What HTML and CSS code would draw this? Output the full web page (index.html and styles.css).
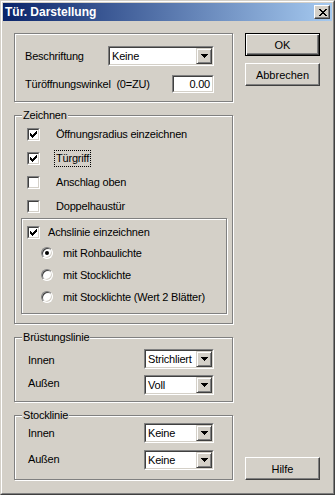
FILE: index.html
```html
<!DOCTYPE html>
<html lang="de">
<head>
    <meta charset="UTF-8">
    <meta name="viewport" content="width=device-width, initial-scale=1.0">
    <title>Tür. Darstellung</title>
    <link rel="stylesheet" href="styles.css">
</head>
<body>
<div class="window">
    <div class="frame">
        <div class="titlebar">
            <span class="caption">Tür. Darstellung</span>
            <span class="close">
                <svg width="8" height="7" viewBox="0 0 8 7" shape-rendering="crispEdges"><path d="M0 0h2v1H0zM6 0h2v1H6zM1 1h2v1H1zM5 1h2v1H5zM2 2h4v1H2zM3 3h2v1H3zM2 4h4v1H2zM1 5h2v1H1zM5 5h2v1H5zM0 6h2v1H0zM6 6h2v1H6z"/></svg>
            </span>
        </div>

        <div class="client">
            <div class="left">
                <!-- Beschriftung -->
                <div class="group first">
                    <div class="row row-combo">
                        <span class="lbl lbl-besch">Beschriftung</span>
                        <div class="combo combo-wide">
                            <div class="combo-in">
                                <span class="combo-text">Keine</span>
                                <span class="drop"><svg width="7" height="4" viewBox="0 0 7 4" shape-rendering="crispEdges"><path d="M0 0h7v1H0zM1 1h5v1H1zM2 2h3v1H2zM3 3h1v1H3z"/></svg></span>
                            </div>
                        </div>
                    </div>
                    <div class="row row-edit">
                        <span class="lbl lbl-winkel">Türöffnungswinkel&nbsp; (0=ZU)</span>
                        <div class="edit"><div class="edit-in">0.00</div></div>
                    </div>
                </div>

                <!-- Zeichnen -->
                <fieldset class="zeichnen">
                    <legend>Zeichnen</legend>
                    <div class="body body-zeichnen">
                        <div class="check-row">
                            <span class="cb"><span class="cb-in"><svg width="7" height="7" viewBox="0 0 7 7" shape-rendering="crispEdges"><path d="M0 2h1v3H0zM1 3h1v3H1zM2 4h1v3H2zM3 3h1v3H3zM4 2h1v3H4zM5 1h1v3H5zM6 0h1v3H6z"/></svg></span></span>
                            <span class="check-text">Öffnungsradius einzeichnen</span>
                        </div>
                        <div class="check-row">
                            <span class="cb"><span class="cb-in"><svg width="7" height="7" viewBox="0 0 7 7" shape-rendering="crispEdges"><path d="M0 2h1v3H0zM1 3h1v3H1zM2 4h1v3H2zM3 3h1v3H3zM4 2h1v3H4zM5 1h1v3H5zM6 0h1v3H6z"/></svg></span></span>
                            <span class="check-text focus">Türgriff</span>
                        </div>
                        <div class="check-row">
                            <span class="cb"><span class="cb-in"></span></span>
                            <span class="check-text">Anschlag oben</span>
                        </div>
                        <div class="check-row">
                            <span class="cb"><span class="cb-in"></span></span>
                            <span class="check-text">Doppelhaustür</span>
                        </div>

                        <div class="subbox">
                            <div class="check-row achs">
                                <span class="cb"><span class="cb-in"><svg width="7" height="7" viewBox="0 0 7 7" shape-rendering="crispEdges"><path d="M0 2h1v3H0zM1 3h1v3H1zM2 4h1v3H2zM3 3h1v3H3zM4 2h1v3H4zM5 1h1v3H5zM6 0h1v3H6z"/></svg></span></span>
                                <span class="check-text">Achslinie einzeichnen</span>
                            </div>
                            <div class="radio-row">
                                <span class="radio checked"></span>
                                <span class="radio-text">mit Rohbaulichte</span>
                            </div>
                            <div class="radio-row">
                                <span class="radio"></span>
                                <span class="radio-text">mit Stocklichte</span>
                            </div>
                            <div class="radio-row">
                                <span class="radio"></span>
                                <span class="radio-text">mit Stocklichte (Wert 2 Blätter)</span>
                            </div>
                        </div>
                    </div>
                </fieldset>

                <!-- Brüstungslinie -->
                <fieldset class="linie">
                    <legend>Brüstungslinie</legend>
                    <div class="body body-bruest">
                        <div class="line-row">
                            <span class="lbl lbl-line pad-5">Innen</span>
                            <div class="combo combo-small">
                                <div class="combo-in">
                                    <span class="combo-text">Strichliert</span>
                                    <span class="drop"><svg width="7" height="4" viewBox="0 0 7 4" shape-rendering="crispEdges"><path d="M0 0h7v1H0zM1 1h5v1H1zM2 2h3v1H2zM3 3h1v1H3z"/></svg></span>
                                </div>
                            </div>
                        </div>
                        <div class="line-row">
                            <span class="lbl lbl-line pad-2">Außen</span>
                            <div class="combo combo-small">
                                <div class="combo-in">
                                    <span class="combo-text">Voll</span>
                                    <span class="drop"><svg width="7" height="4" viewBox="0 0 7 4" shape-rendering="crispEdges"><path d="M0 0h7v1H0zM1 1h5v1H1zM2 2h3v1H2zM3 3h1v1H3z"/></svg></span>
                                </div>
                            </div>
                        </div>
                    </div>
                </fieldset>

                <!-- Stocklinie -->
                <fieldset class="linie">
                    <legend>Stocklinie</legend>
                    <div class="body body-stock">
                        <div class="line-row tall">
                            <span class="lbl lbl-line pad-4">Innen</span>
                            <div class="combo combo-small">
                                <div class="combo-in">
                                    <span class="combo-text">Keine</span>
                                    <span class="drop"><svg width="7" height="4" viewBox="0 0 7 4" shape-rendering="crispEdges"><path d="M0 0h7v1H0zM1 1h5v1H1zM2 2h3v1H2zM3 3h1v1H3z"/></svg></span>
                                </div>
                            </div>
                        </div>
                        <div class="line-row tall">
                            <span class="lbl lbl-line pad-3">Außen</span>
                            <div class="combo combo-small">
                                <div class="combo-in">
                                    <span class="combo-text">Keine</span>
                                    <span class="drop"><svg width="7" height="4" viewBox="0 0 7 4" shape-rendering="crispEdges"><path d="M0 0h7v1H0zM1 1h5v1H1zM2 2h3v1H2zM3 3h1v1H3z"/></svg></span>
                                </div>
                            </div>
                        </div>
                    </div>
                </fieldset>
            </div>

            <div class="right">
                <button class="btn default">OK</button>
                <button class="btn">Abbrechen</button>
                <button class="btn help">Hilfe</button>
            </div>
        </div>
    </div>
</div>
</body>
</html>
```

FILE: styles.css
```css
:root {
    --face: #d4d0c8;
    --shadow: #808080;
    --dark: #404040;
    --light: #ffffff;
}

* {
    box-sizing: border-box;
}

body {
    margin: 0;
    font-family: "Liberation Sans", Arial, sans-serif;
    font-size: 11px;
    letter-spacing: -0.2px;
    color: #000;
    background: var(--face);
}

/* Window frame */
.window {
    width: 335px;
    height: 495px;
    border: 1px solid;
    border-color: var(--face) var(--dark) var(--dark) var(--face);
}

.frame {
    height: 100%;
    border: 1px solid;
    border-color: var(--light) var(--shadow) var(--shadow) var(--light);
    padding: 1px;
    background: var(--face);
}

.titlebar {
    height: 18px;
    display: flex;
    align-items: center;
    justify-content: space-between;
    padding: 0 2px 0 2px;
    background: linear-gradient(to right, #0a246a, #a6caf0);
}

.caption {
    color: #fff;
    font-weight: bold;
    font-size: 12px;
    letter-spacing: 0;
    line-height: 18px;
}

.close {
    width: 16px;
    height: 14px;
    display: flex;
    align-items: center;
    justify-content: center;
    padding-left: 1px;
    background: var(--face);
    border: 1px solid;
    border-color: var(--light) var(--dark) var(--dark) var(--light);
    box-shadow: inset -1px -1px var(--shadow);
}

/* Client area */
.client {
    display: flex;
    padding: 12px 0 0 11px;
}

.left {
    width: 219px;
    display: flex;
    flex-direction: column;
}

.right {
    width: 75px;
    margin-left: 12px;
    display: flex;
    flex-direction: column;
}

/* Etched groups */
.group,
fieldset,
.subbox {
    border: 1px solid var(--shadow);
    box-shadow: inset 1px 1px var(--light), 1px 1px var(--light);
}

.group.first {
    height: 69px;
    padding: 12px 0 0 10px;
}

fieldset {
    margin: 7px 0 0 0;
    padding: 0;
    min-width: 0;
    width: 219px;
}

legend {
    margin-left: 7px;
    padding: 0 1px;
    line-height: 13px;
    background: var(--face);
}

.zeichnen {
    height: 215px;
}

.linie {
    height: 71px;
}

.body-zeichnen {
    padding: 0 5px 0 6px;
}

.body-bruest {
    padding: 5px 0 0 13px;
}

.body-stock {
    padding: 1px 0 0 13px;
}

/* Rows */
.row {
    display: flex;
    align-items: center;
}

.row-combo {
    height: 20px;
}

.row-edit {
    height: 18px;
    margin-top: 9px;
}

.lbl {
    line-height: 13px;
}

.lbl-besch {
    width: 83px;
}

.lbl-winkel {
    width: 147px;
}

.lbl-line {
    width: 116px;
}

.line-row {
    display: flex;
    align-items: flex-start;
    height: 26px;
}

.line-row.tall {
    height: 27px;
}

.pad-2 { padding-top: 2px; }
.pad-3 { padding-top: 3px; }
.pad-4 { padding-top: 4px; }
.pad-5 { padding-top: 5px; }

/* Combo box */
.combo {
    height: 20px;
    border: 1px solid;
    border-color: var(--shadow) var(--light) var(--light) var(--shadow);
}

.combo-wide {
    width: 106px;
}

.combo-small {
    width: 70px;
}

.combo-in {
    height: 100%;
    display: flex;
    background: #fff;
    border: 1px solid;
    border-color: var(--dark) var(--face) var(--face) var(--dark);
}

.combo-text {
    flex: 1;
    padding-left: 2px;
    line-height: 16px;
    white-space: nowrap;
    overflow: hidden;
}

.drop {
    width: 16px;
    height: 16px;
    display: flex;
    align-items: center;
    justify-content: center;
    background: var(--face);
    border: 1px solid;
    border-color: var(--face) var(--dark) var(--dark) var(--face);
    box-shadow: inset 1px 1px var(--light), inset -1px -1px var(--shadow);
}

/* Edit field */
.edit {
    width: 42px;
    height: 18px;
    border: 1px solid;
    border-color: var(--shadow) var(--light) var(--light) var(--shadow);
}

.edit-in {
    height: 100%;
    background: #fff;
    border: 1px solid;
    border-color: var(--dark) var(--face) var(--face) var(--dark);
    text-align: right;
    padding-right: 2px;
    line-height: 14px;
}

/* Check boxes */
.check-row {
    display: flex;
    align-items: center;
    height: 24px;
    padding-left: 6px;
}

.cb {
    width: 13px;
    height: 13px;
    flex: none;
    border: 1px solid;
    border-color: var(--shadow) var(--light) var(--light) var(--shadow);
}

.cb-in {
    display: flex;
    align-items: center;
    justify-content: center;
    width: 100%;
    height: 100%;
    background: #fff;
    border: 1px solid;
    border-color: var(--dark) var(--face) var(--face) var(--dark);
}

.check-text {
    margin-left: 14px;
    line-height: 13px;
    padding: 1px;
    border: 1px solid transparent;
}

.check-text.focus {
    border: 1px dotted #000;
}

/* Achslinie box */
.subbox {
    height: 96px;
    width: 206px;
    padding-top: 3px;
}

.check-row.achs {
    height: 20px;
    padding-left: 5px;
}

.check-row.achs .check-text {
    margin-left: 6px;
}

.radio-row {
    display: flex;
    align-items: center;
    height: 22px;
    padding-left: 19px;
}

.radio {
    width: 12px;
    height: 12px;
    flex: none;
    display: flex;
    align-items: center;
    justify-content: center;
    border-radius: 50%;
    background: #fff;
    border: 1px solid;
    border-color: var(--shadow) var(--light) var(--light) var(--shadow);
    box-shadow: inset 1px 1px var(--dark), inset -1px -1px var(--face);
}

.radio.checked::after {
    content: "";
    width: 4px;
    height: 4px;
    border-radius: 50%;
    background: #000;
}

.radio-text {
    margin-left: 10px;
    line-height: 13px;
}

/* Buttons */
.btn {
    width: 75px;
    height: 23px;
    padding: 0;
    margin: 0;
    font-family: "Liberation Sans", Arial, sans-serif;
    font-size: 11px;
    color: #000;
    background: var(--face);
    border: 1px solid;
    border-color: var(--light) var(--dark) var(--dark) var(--light);
    box-shadow: inset -1px -1px var(--shadow), inset 1px 1px var(--face);
}

.btn.default {
    border-color: #000;
    box-shadow: inset 1px 1px var(--light), inset -1px -1px var(--dark), inset -2px -2px var(--shadow);
}

.btn + .btn {
    margin-top: 7px;
}

.btn.help {
    margin-top: auto;
}
```
